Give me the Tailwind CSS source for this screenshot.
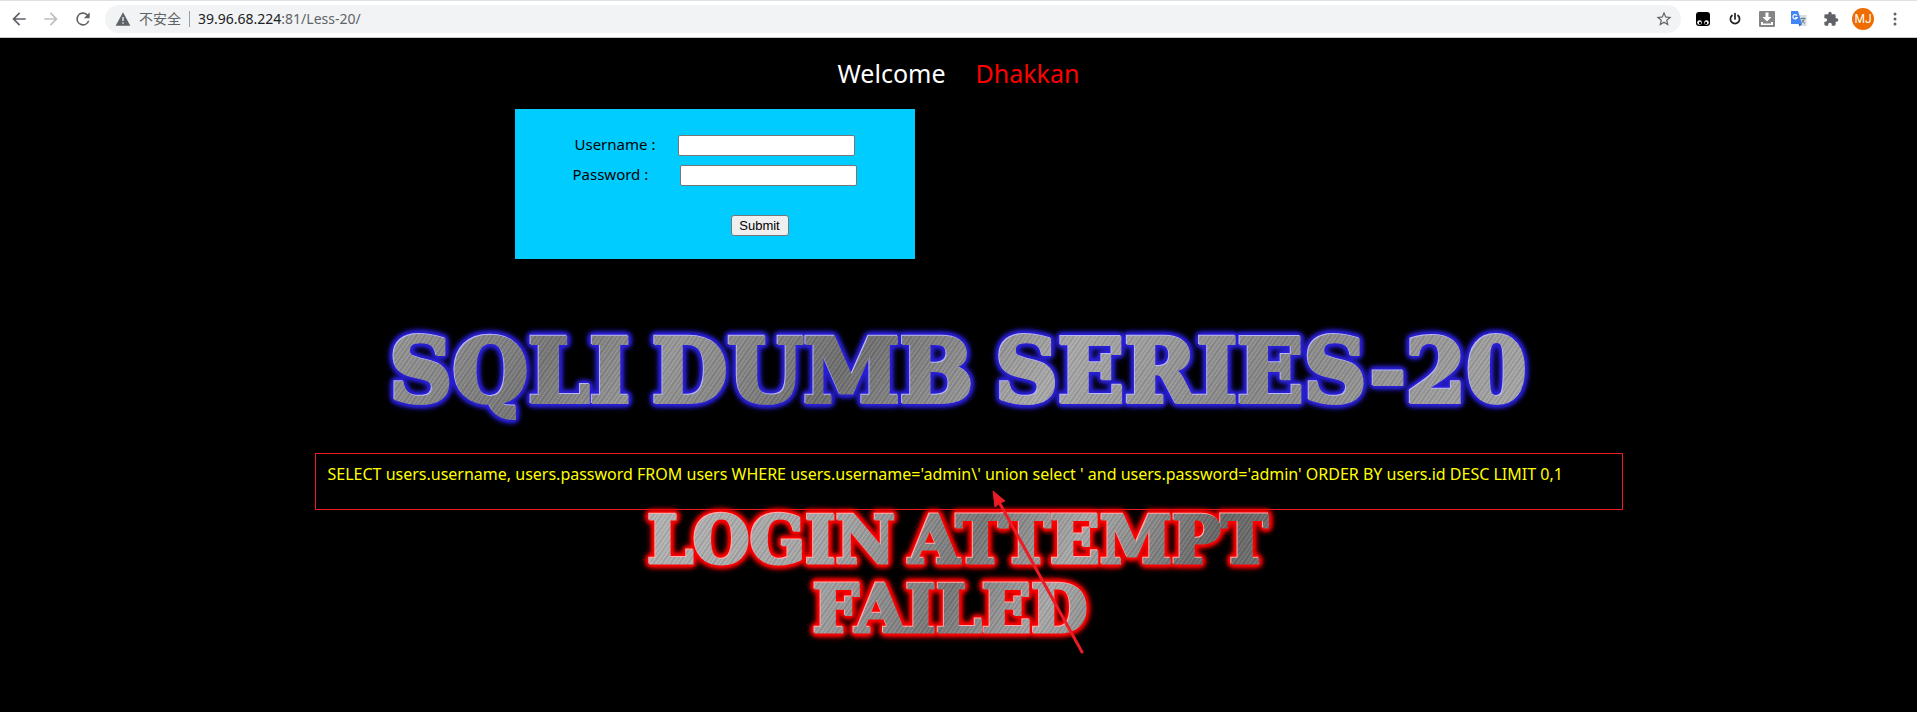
<!DOCTYPE html>
<html lang="en">
<head>
<meta charset="utf-8">
<meta name="viewport" content="width=device-width, initial-scale=1">
<title>Less-20</title>
<script src="https://cdn.jsdelivr.net/npm/@tailwindcss/browser@4"></script>
</head>
<body class="min-h-screen bg-black font-['Noto_Sans','Noto_Sans_CJK_SC',sans-serif]">
<header class="flex h-[38px] items-center border-t border-b border-t-[#dee1e6] border-b-[#c8cacd] bg-white pr-3.5 pl-2 text-[#5f6368]">
  <nav class="flex w-[97px] shrink-0 items-center gap-3 pl-px" aria-label="Navigation">
    <button aria-label="Back" class="size-5"><svg viewBox="0 0 24 24" class="size-5" fill="currentColor"><path d="M20 11H7.83l5.59-5.59L12 4l-8 8 8 8 1.41-1.41L7.83 13H20z"/></svg></button>
    <button aria-label="Forward" class="size-5 text-[#bdbfc1]"><svg viewBox="0 0 24 24" class="size-5" fill="currentColor"><path d="M4 11h12.17l-5.59-5.59L12 4l8 8-8 8-1.41-1.41L16.17 13H4z"/></svg></button>
    <button aria-label="Reload" class="size-5"><svg viewBox="0 0 24 24" class="size-5" fill="currentColor"><path d="M17.65 6.35A8 8 0 1 0 19.73 14h-2.08A6 6 0 1 1 12 6c1.66 0 3.14.69 4.22 1.78L13 11h7V4z"/></svg></button>
  </nav>
  <div class="flex h-7 flex-1 items-center rounded-full bg-[#f1f3f4] pr-2 pl-2.5 text-sm">
    <svg viewBox="0 0 24 24" class="size-4" fill="currentColor"><path d="M1 22h22L12 2zm12-3h-2v-2h2zm0-4h-2V9h2z"/></svg>
    <span class="ml-2 text-sm">不安全</span>
    <span class="mx-2 h-4 w-px bg-[#9aa0a6]"></span>
    <span class="flex-1 whitespace-nowrap"><span class="text-[#202124]">39.96.68.224</span>:81/Less-20/</span>
    <button aria-label="Bookmark this page"><svg viewBox="0 0 24 24" class="size-[18px]" fill="currentColor"><path d="m22 9.24-7.19-.62L12 2 9.19 8.63 2 9.24l5.46 4.73L5.82 21 12 17.27 18.18 21l-1.63-7.03zM12 15.4l-3.76 2.27 1-4.28-3.32-2.88 4.38-.38L12 6.1l1.71 4.04 4.38.38-3.32 2.88 1 4.28z"/></svg></button>
  </div>
  <div class="ml-[14px] flex items-center gap-4">
    <button aria-label="Tampermonkey"><svg viewBox="0 0 16 16" class="size-4"><path fill="#000" d="M4 1h8a3 3 0 0 1 3 3v8a3 3 0 0 1-3 3H4a3 3 0 0 1-3-3V4a3 3 0 0 1 3-3z"/><circle cx="4.500" cy="11.500" r="2.300" fill="#fff"/><circle cx="11.500" cy="11.500" r="2.300" fill="#fff"/><circle cx="5" cy="12" r="1.200"/><circle cx="11" cy="12" r="1.200"/></svg></button>
    <button aria-label="Power"><svg viewBox="0 0 16 16" class="size-4" fill="none" stroke="#222" stroke-width="1.700" stroke-linecap="round"><path d="M8 2.500v5.500M5 4.500a4.600 4.600 0 1 0 6 0"/></svg></button>
    <button aria-label="Downloads"><svg viewBox="0 0 16 16" class="size-4"><rect width="16" height="16" rx="1" fill="#858585"/><path fill="#fff" d="M6.500 1.500h3V6h3L8 10.500 3.500 6h3zM2 11h2v1.500h8V11h2v3H2z"/></svg></button>
    <button aria-label="Translate"><svg viewBox="0 0 16 16" class="size-4"><path fill="#d9dadd" d="M6 4h9.500v11H9.500z"/><path fill="#4285f4" d="M0 0h7l4 13H0z"/><path fill="#2a66ca" d="M7.500 13H11l-2.500 2.500z"/><path fill="none" stroke="#fff" stroke-width="1.200" d="M6 4.600A2.200 2.200 0 1 0 6.200 6.500H4.200"/><path fill="none" stroke="#607d8b" d="M9.500 7.500h5M12 6.500v1M13.500 7.500c-.5 2-2 3.500-3 4.500M10.700 9c.8 1.500 2 2.500 3.300 3.500"/></svg></button>
    <button aria-label="Extensions"><svg viewBox="0 0 24 24" class="size-4" fill="currentColor"><path d="M20.500 11H19V7a2 2 0 0 0-2-2h-4V3.500a2.500 2.500 0 0 0-5 0V5H4a2 2 0 0 0-2 2v3.800h1.500a2.700 2.700 0 0 1 0 5.400H2V20a2 2 0 0 0 2 2h3.800v-1.500a2.700 2.700 0 0 1 5.400 0V22H17a2 2 0 0 0 2-2v-4h1.500a2.500 2.500 0 0 0 0-5z"/></svg></button>
    <button aria-label="Profile" class="-mx-[3px] size-[22px] rounded-full bg-[#ef6c00] font-['Roboto',sans-serif] text-xs leading-[22px] text-white">MJ</button>
    <button aria-label="Menu"><svg viewBox="0 0 16 16" class="size-4" fill="currentColor"><circle cx="8" cy="3" r="1.500"/><circle cx="8" cy="8" r="1.500"/><circle cx="8" cy="13" r="1.500"/></svg></button>
  </div>
</header>

<main class="flex flex-col items-center">
  <h1 class="mt-[15px] flex gap-[30px] text-[25px] leading-10 text-white"><span>Welcome</span><span class="text-[#ff0000]">Dhakkan</span></h1>

  <div class="mt-4 w-full max-w-[888px]">
    <form class="flex h-[150px] w-[400px] flex-col bg-[#00ccff] pt-[26px] text-[15px] leading-[19px] text-black" onsubmit="return false">
      <div class="flex pl-[60px]"><label for="uname" class="w-[103px]">Username :</label><input id="uname" name="uname" type="text" class="h-[21px] w-[177px] rounded-xs border border-[#767676] bg-white px-1 text-[13px]"></div>
      <div class="mt-[9px] flex pl-[58px]"><label for="passwd" class="w-[107px]">Password :</label><input id="passwd" name="passwd" type="password" class="h-[21px] w-[177px] rounded-xs border border-[#767676] bg-white px-1 text-[13px]"></div>
      <button type="submit" class="mt-[29px] ml-[216px] h-[21px] w-[58px] rounded-[3px] border border-[#767676] bg-[#efefef] font-['Liberation_Sans',sans-serif] text-[13px] leading-[19px]">Submit</button>
    </form>
  </div>

  <!-- Brushed-metal headline with a blue glow -->
  <div class="mt-[61px] [filter:drop-shadow(-1px_-1px_0_#ffffffb0)_drop-shadow(0_0_2px_#2a20d8)_drop-shadow(0_0_1px_#2a20d8)_drop-shadow(0_0_2px_#2a20d8)_drop-shadow(0_0_2px_#2a20d8)]">
    <h2 class="flex gap-[22px] bg-[repeating-linear-gradient(125deg,#ffffff18_0_1px,#00000018_2px_3px,#ffffff10_4px_5px,#00000010_6px_7px),linear-gradient(125deg,#999,#777_15%,#999_25%,#6e6e6e_40%,#aaa_58%,#888_75%,#aaa)] bg-clip-text font-['DejaVu_Serif',serif] text-[87px] leading-[103px] font-bold whitespace-nowrap text-transparent [-webkit-text-stroke:4px_transparent]"><span>SQLI</span> <span>DUMB</span> <span>SERIES-20</span></h2>
  </div>

  <div class="relative mt-[30px] ml-5 h-[57px] w-full max-w-[1308px] border border-[#ed1c24] pt-2 pl-3">
    <p class="text-base leading-6 whitespace-nowrap text-[#ffff00]">SELECT users.username, users.password FROM users WHERE users.username='admin\' union select ' and users.password='admin' ORDER BY users.id DESC LIMIT 0,1</p>
    <svg class="absolute top-[36px] left-[676px] z-10 h-[165px] w-[94px]" viewBox="0 0 94 165" fill="none"><path d="M7 12 90 162" stroke="#ed1c24" stroke-width="3" stroke-linecap="round"/><path d="M1 1 13 11l-5 2-5 4z" fill="#ed1c24" stroke="#ed1c24"/></svg>
  </div>

  <!-- Brushed-metal result message with a red glow -->
  <div class="-mt-1 [filter:drop-shadow(-1px_-1px_0_#ffffffb0)_drop-shadow(0_0_2px_#f00)_drop-shadow(0_0_1px_#f00)_drop-shadow(0_0_2px_#f00)_drop-shadow(0_0_2px_#f00)]">
    <h2 class="flex flex-col items-center bg-[repeating-linear-gradient(125deg,#ffffff18_0_1px,#00000018_2px_3px,#ffffff10_4px_5px,#00000010_6px_7px),linear-gradient(115deg,#b5b5b5,#a5a5a5_30%,#777_50%,#aaa_65%,#666_85%,#777)] bg-clip-text font-['DejaVu_Serif',serif] text-[65px] leading-[69px] font-bold text-transparent [-webkit-text-stroke:3px_transparent]"><span class="flex gap-3.5"><span>LOGIN</span> <span>ATTEMPT</span></span> <span class="pr-4">FAILED</span></h2>
  </div>
</main>
</body>
</html>
